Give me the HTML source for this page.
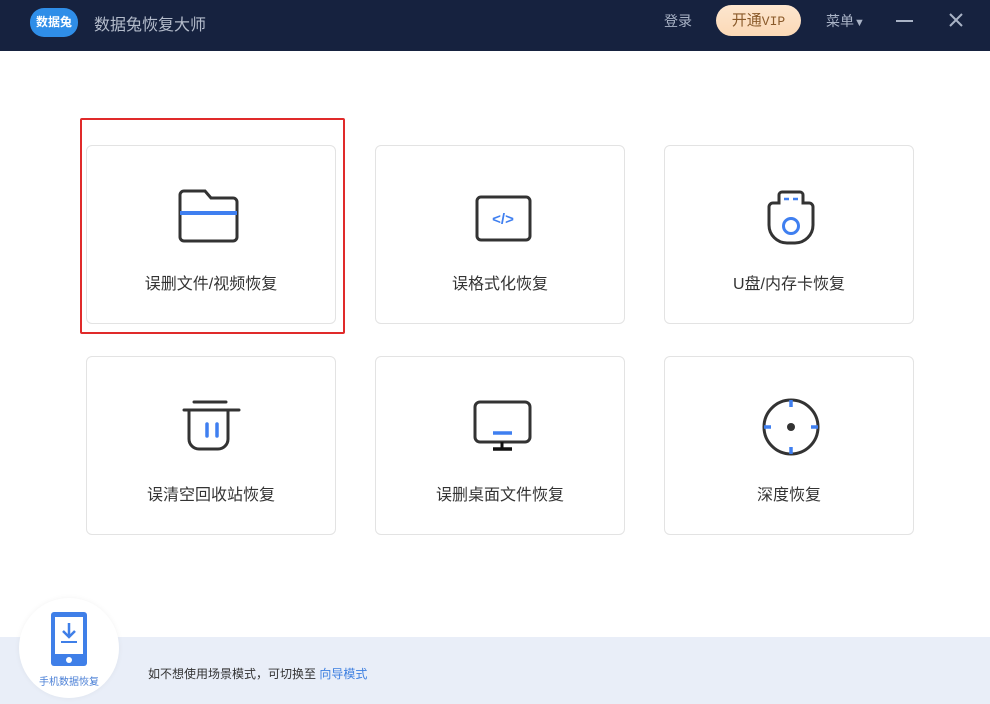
<!DOCTYPE html><html><head><meta charset="utf-8"><style>
*{margin:0;padding:0;box-sizing:border-box}
body{width:990px;height:704px;position:relative;background:#fff;font-family:"Liberation Sans","Noto Sans CJK SC",sans-serif;overflow:hidden}
.hd{position:absolute;left:0;top:0;width:990px;height:51px;background:#16223f}
.card{position:absolute;width:250px;height:179px;border:1px solid #e3e3e3;border-radius:6px;background:#fff}
.card .t{position:absolute;left:0;right:0;top:124px;text-align:center;font-size:16px;color:#333}
.card svg{position:absolute;left:85px;top:35px}
.foot{position:absolute;left:0;top:637px;width:990px;height:67px;background:#e9eef8}
</style></head><body>
<div class="hd">
 <div style="position:absolute;left:30px;top:8px;width:48px;height:29px;background:#2f8ee8;border-radius:14px;color:#fff;font-size:12px;line-height:29px;text-align:center;font-weight:bold">数据兔</div>
 <div style="position:absolute;left:94px;top:11px;font-size:16px;color:#b4bccb">数据兔恢复大师</div>
 <div style="position:absolute;left:664px;top:11px;font-size:14px;color:#a9b3c6">登录</div>
 <div style="position:absolute;left:716px;top:5px;width:85px;height:31px;border-radius:16px;background:linear-gradient(#fde6cf,#fbd9b6);color:#8a5a2a;font-size:15px;line-height:31px;text-align:center">开通<span style="font-family:'Liberation Mono',monospace;font-size:13px">VIP</span></div>
 <div style="position:absolute;left:826px;top:11px;font-size:14px;color:#a9b3c6">菜单<span style="font-size:11px">▼</span></div>
 <div style="position:absolute;left:896px;top:20px;width:17px;height:2px;background:#a9b3c6"></div>
 <svg style="position:absolute;left:949px;top:13px" width="14" height="14"><path d="M1 1L13 13M13 1L1 13" stroke="#a9b3c6" stroke-width="2"/></svg>
</div>
<div style="position:absolute;left:80px;top:118px;width:265px;height:216px;border:2px solid #e02a2a;border-radius:2px"></div>
<div class="card" style="left:86px;top:145px"><svg width="80" height="70" viewBox="85 35 80 70"><path d="M97 95h49a4 4 0 0 0 4-4V56a4 4 0 0 0-4-4h-22l-6-7h-21a4 4 0 0 0-4 4v42a4 4 0 0 0 4 4z" fill="none" stroke="#333" stroke-width="3"/><line x1="93" y1="67" x2="150" y2="67" stroke="#3f7ff0" stroke-width="4"/></svg><div class="t">误删文件/视频恢复</div></div>
<div class="card" style="left:375px;top:145px"><svg width="80" height="70" viewBox="85 35 80 70"><rect x="101" y="51" width="53" height="43" rx="4" fill="none" stroke="#333" stroke-width="3"/><text x="127" y="78" font-size="15" font-weight="bold" fill="#3f7ff0" text-anchor="middle" font-family="Liberation Sans">&lt;/&gt;</text></svg><div class="t">误格式化恢复</div></div>
<div class="card" style="left:664px;top:145px"><svg width="80" height="70" viewBox="85 35 80 70"><path d="M114 57v-8a3 3 0 0 1 3-3h18a3 3 0 0 1 3 3v8h6a4 4 0 0 1 4 4v18a18 18 0 0 1-18 18h-8a18 18 0 0 1-18-18V61a4 4 0 0 1 4-4z" fill="none" stroke="#333" stroke-width="3"/><line x1="119" y1="53" x2="133" y2="53" stroke="#3f7ff0" stroke-width="2.5" stroke-dasharray="5 4"/><circle cx="126" cy="80" r="7.5" fill="none" stroke="#3f7ff0" stroke-width="3"/></svg><div class="t">U盘/内存卡恢复</div></div>
<div class="card" style="left:86px;top:356px"><svg width="80" height="70" viewBox="85 35 80 70"><line x1="107" y1="45" x2="139" y2="45" stroke="#333" stroke-width="3" stroke-linecap="round"/><line x1="97" y1="53" x2="152" y2="53" stroke="#333" stroke-width="3" stroke-linecap="round"/><path d="M102 54v28a10 10 0 0 0 10 10h19a10 10 0 0 0 10-10V54" fill="none" stroke="#333" stroke-width="3"/><line x1="120" y1="67" x2="120" y2="79" stroke="#3f7ff0" stroke-width="3.5" stroke-linecap="round"/><line x1="130" y1="67" x2="130" y2="79" stroke="#3f7ff0" stroke-width="3.5" stroke-linecap="round"/></svg><div class="t">误清空回收站恢复</div></div>
<div class="card" style="left:375px;top:356px"><svg width="80" height="70" viewBox="85 35 80 70"><rect x="99" y="45" width="55" height="40" rx="5" fill="none" stroke="#333" stroke-width="3"/><line x1="117" y1="76" x2="136" y2="76" stroke="#3f7ff0" stroke-width="3.5"/><line x1="126" y1="85" x2="126" y2="91" stroke="#111" stroke-width="3"/><line x1="117" y1="92" x2="136" y2="92" stroke="#111" stroke-width="3.5"/></svg><div class="t">误删桌面文件恢复</div></div>
<div class="card" style="left:664px;top:356px"><svg width="80" height="70" viewBox="85 35 80 70"><circle cx="126" cy="70" r="27" fill="none" stroke="#333" stroke-width="3"/><circle cx="126" cy="70" r="4" fill="#333"/><g stroke="#3f7ff0" stroke-width="3.5"><line x1="126" y1="43" x2="126" y2="50"/><line x1="126" y1="90" x2="126" y2="97"/><line x1="99" y1="70" x2="106" y2="70"/><line x1="146" y1="70" x2="153" y2="70"/></g></svg><div class="t">深度恢复</div></div>
<div class="foot"></div>
<div style="position:absolute;left:19px;top:598px;width:100px;height:100px;border-radius:50%;background:#fff;box-shadow:0 0 6px rgba(0,0,0,0.05)"></div>
<svg style="position:absolute;left:50px;top:611px" width="38" height="56" viewBox="0 0 38 56"><rect x="1" y="1" width="36" height="54" rx="3" fill="#3f7fe8"/><rect x="5" y="6" width="28" height="37" fill="#fff"/><path d="M19 12v13M13 20l6 6 6-6" fill="none" stroke="#3f7fe8" stroke-width="2.5"/><line x1="11" y1="31" x2="27" y2="31" stroke="#3f7fe8" stroke-width="2"/><circle cx="19" cy="49" r="3" fill="#fff"/></svg>
<div style="position:absolute;left:39px;top:673px;font-size:10px;color:#4a7fd6">手机数据恢复</div>
<div style="position:absolute;left:148px;top:665px;font-size:12px;color:#333">如不想使用场景模式，可切换至 <span style="color:#3d7fe0">向导模式</span></div>
</body></html>
